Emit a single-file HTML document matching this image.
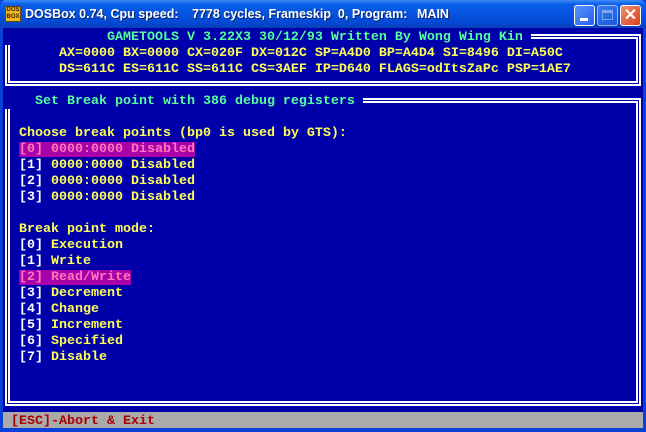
<!DOCTYPE html>
<html><head><meta charset="utf-8"><style>
*{margin:0;padding:0;box-sizing:border-box}
body{width:646px;height:432px;overflow:hidden;background:#0a3fd8;position:relative;font-family:"Liberation Sans",sans-serif}
#tb{position:absolute;left:0;top:0;width:646px;height:28px;background:linear-gradient(#3d8af7 0%,#0a5fe8 15%,#0553e0 50%,#0447d0 85%,#0a3cb8 100%);border-radius:6px 6px 0 0}
.tt{position:absolute;top:7px;color:#fff;font-weight:bold;font-size:12.5px;white-space:pre;text-shadow:1px 1px 0 #0a246a}
.btn{position:absolute;top:5px;width:21px;height:21px;border:1px solid #fff;border-radius:3px}
#dos{position:absolute;left:3px;top:28px;width:640px;height:400px;background:#0000aa;overflow:hidden}
pre{position:absolute;left:0;top:2px;font-family:"Liberation Mono",monospace;font-weight:bold;font-size:13.33px;line-height:16px;color:#ffff55}
.box{position:absolute;border:5px double #fff}
.w{color:#fff}.y{color:#ffff55}.g{color:#55ff99}
.hl{background:#aa00aa;color:#ff77bb}
.t{background:#0000aa}
#st{position:absolute;left:0;top:384px;width:640px;height:16px;background:#aaaaaa}
</style></head><body>
<div id="tb">
 <div style="position:absolute;left:5px;top:6px;width:16px;height:16px;background:#f0b820;border:1px solid #6a4a00;font:bold 6px 'Liberation Sans';color:#402000;line-height:7px;text-align:center">DOS<br>BOX</div>
 <div class="tt" style="left:25px">DOSBox 0.74, Cpu speed:</div>
 <div class="tt" style="left:192px">7778 cycles, Frameskip  0, Program:</div>
 <div class="tt" style="left:417px">MAIN</div>
 <div class="btn" style="left:574px;background:linear-gradient(135deg,#5a92f8,#2461e8)"><div style="position:absolute;left:5px;top:12px;width:8px;height:3px;background:#fff"></div></div>
 <div class="btn" style="left:597px;background:linear-gradient(135deg,#5a92f8,#2a66e8);opacity:.6"><div style="position:absolute;left:4px;top:4px;width:11px;height:10px;border:1px solid #cde;border-top-width:3px"></div></div>
 <div class="btn" style="left:620px;background:linear-gradient(135deg,#f09070,#d8401a);color:#fff;font:bold 16px 'Liberation Sans';text-align:center;line-height:19px">✕</div>
</div>
<div id="dos">
 <div class="box" style="left:2px;top:6px;width:636px;height:52px"></div>
 <div class="box" style="left:2px;top:70px;width:636px;height:308px"></div>
 <div id="st"></div>
<pre>
<span class="t g">             GAMETOOLS V 3.22X3 30/12/93 Written By Wong Wing Kin </span>
<span class="y">       AX=0000 BX=0000 CX=020F DX=012C SP=A4D0 BP=A4D4 SI=8496 DI=A50C</span>
<span class="y">       DS=611C ES=611C SS=611C CS=3AEF IP=D640 FLAGS=odItsZaPc PSP=1AE7</span>

<span class="t g">    Set Break point with 386 debug registers </span>

  <span class="y">Choose break points (bp0 is used by GTS):</span>
  <span class="hl">[0] 0000:0000 Disabled</span>
  <span class="w">[1]</span> 0000:0000 Disabled
  <span class="w">[2]</span> 0000:0000 Disabled
  <span class="w">[3]</span> 0000:0000 Disabled

  <span class="y">Break point mode:</span>
  <span class="w">[0]</span> Execution
  <span class="w">[1]</span> Write
  <span class="hl">[2] Read/Write</span>
  <span class="w">[3]</span> Decrement
  <span class="w">[4]</span> Change
  <span class="w">[5]</span> Increment
  <span class="w">[6]</span> Specified
  <span class="w">[7]</span> Disable



 <span style="color:#aa0000">[ESC]-Abort &amp; Exit</span></pre>
</div>
</body></html>
